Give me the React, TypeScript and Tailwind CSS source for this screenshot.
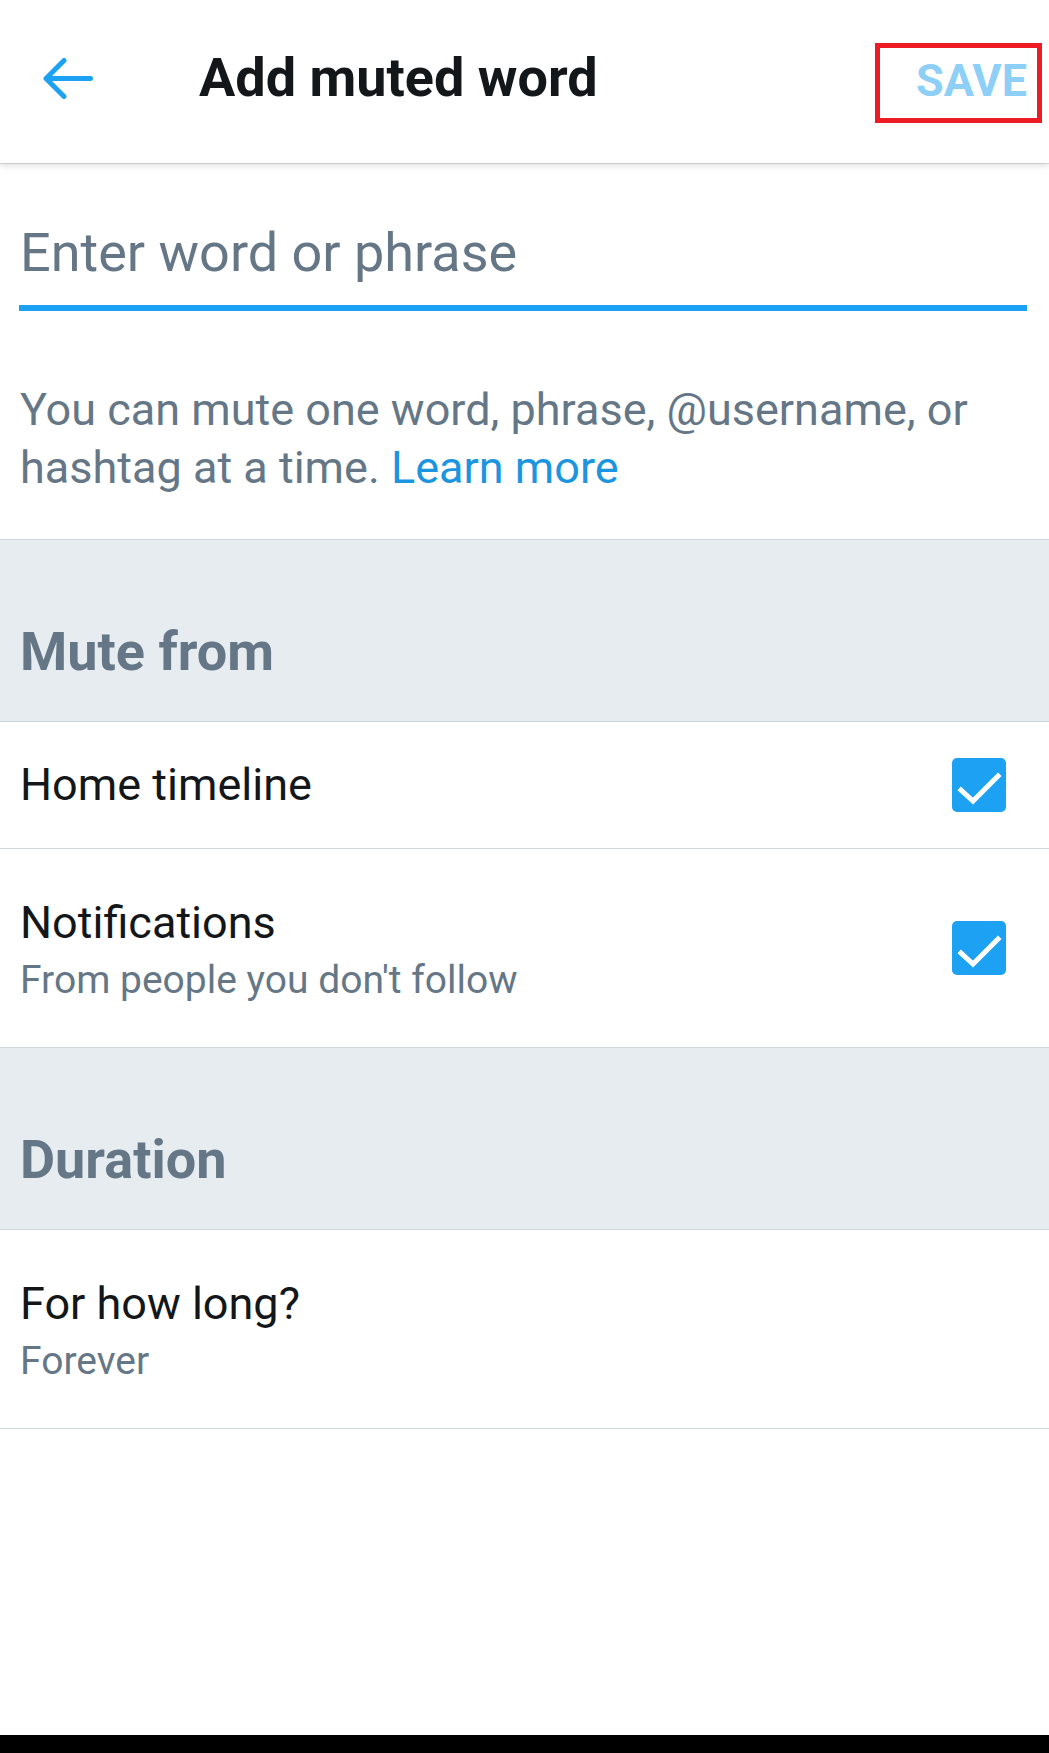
import { useState } from 'react'

const rows = [
  { title: 'Home timeline', sub: null },
  { title: 'Notifications', sub: "From people you don't follow" },
]

function BackArrow() {
  return (
    <svg width="50" height="41" viewBox="0 0 50 41" fill="none">
      <path
        d="M3 20.5H47.5M21 2.5L3 20.5L21 38.5"
        stroke="#1DA1F2"
        strokeWidth="5"
        strokeLinecap="round"
        strokeLinejoin="round"
      />
    </svg>
  )
}

function Checkbox({ checked, onToggle }: { checked: boolean; onToggle: () => void }) {
  return (
    <button
      onClick={onToggle}
      className={`w-[54px] h-[54px] rounded-[5px] flex items-center justify-center shrink-0 ${
        checked ? 'bg-[#1DA1F2]' : 'border-[4px] border-[#657786] bg-white'
      }`}
    >
      {checked && (
        <svg width="54" height="54" viewBox="0 0 54 54" fill="none">
          <path d="M9 32L21 43L46 18" stroke="white" strokeWidth="5" strokeLinecap="square" />
        </svg>
      )}
    </button>
  )
}

function SectionHeader({ label }: { label: string }) {
  return (
    <div className="h-[181px] bg-[#E6ECF0] pt-[81px] px-[20px]">
      <h2 className="text-[54px] leading-[62px] font-bold text-[#657786]">{label}</h2>
    </div>
  )
}

export default function App() {
  const [checked, setChecked] = useState([true, true])
  const [word, setWord] = useState('')

  return (
    <div
      className="h-[1753px] flex flex-col bg-white overflow-hidden"
      style={{ fontFamily: 'Roboto, "Noto Sans", sans-serif' }}
    >
      {/* toolbar */}
      <header className="relative z-10 h-[163px] flex items-start bg-white shadow-[0_1px_0_rgba(0,0,0,0.12),0_3px_6px_rgba(0,0,0,0.12)] shrink-0">
        <button className="ml-[43px] mt-[58px]">
          <BackArrow />
        </button>
        <h1 className="ml-[106px] mt-[46px] text-[54px] leading-[64px] font-bold text-[#14171A]">
          Add muted word
        </h1>
        <div className="ml-auto mr-[7px] mt-[43px] w-[167px] h-[80px] border-[5px] border-[#ED1C24] pt-[10px] pr-[10px] text-right">
          <span className="text-[45px] leading-[46px] font-bold text-[#8ECFF7]">SAVE</span>
        </div>
      </header>

      {/* input */}
      <div className="pt-[58px] pl-[19px] pr-[22px]">
        <input
          value={word}
          onChange={(e) => setWord(e.target.value)}
          placeholder="Enter word or phrase"
          className="w-full h-[64px] p-0 pl-[1px] text-[54px] leading-[64px] text-[#14171A] placeholder:text-[#657786] outline-none bg-transparent"
        />
        <div className="mt-[20px] h-[6px] bg-[#1DA1F2]" />
      </div>

      <p className="pt-[70px] pb-[42px] px-[20px] text-[45px] leading-[58px] text-[#657786] border-b border-[#CCD6DD]">
        You can mute one word, phrase, @username, or hashtag at a time.{' '}
        <span className="text-[#1B95E0]">Learn more</span>
      </p>

      <div className="border-b border-[#CCD6DD]">
        <SectionHeader label="Mute from" />
      </div>

      {rows.map((row, i) => (
        <div
          key={row.title}
          className={`flex items-center justify-between pl-[20px] pr-[43px] border-b border-[#CCD6DD] ${
            row.sub ? 'h-[199px]' : 'h-[127px]'
          }`}
        >
          <div className={row.sub ? 'pt-[4px]' : ''}>
            <div className="text-[45px] leading-[52px] text-[#14171A]">{row.title}</div>
            {row.sub && (
              <div className="mt-[8px] text-[39px] leading-[46px] text-[#657786]">{row.sub}</div>
            )}
          </div>
          <Checkbox
            checked={checked[i]}
            onToggle={() => setChecked((c) => c.map((v, j) => (j === i ? !v : v)))}
          />
        </div>
      ))}

      <div className="border-b border-[#CCD6DD]">
        <SectionHeader label="Duration" />
      </div>

      <div className="h-[199px] flex items-center pl-[20px] border-b border-[#CCD6DD]">
        <div className="pt-[4px]">
          <div className="text-[45px] leading-[52px] text-[#14171A]">For how long?</div>
          <div className="mt-[8px] text-[39px] leading-[46px] text-[#657786]">Forever</div>
        </div>
      </div>

      <div className="flex-1" />
      <div className="h-[18px] bg-black shrink-0" />
    </div>
  )
}
